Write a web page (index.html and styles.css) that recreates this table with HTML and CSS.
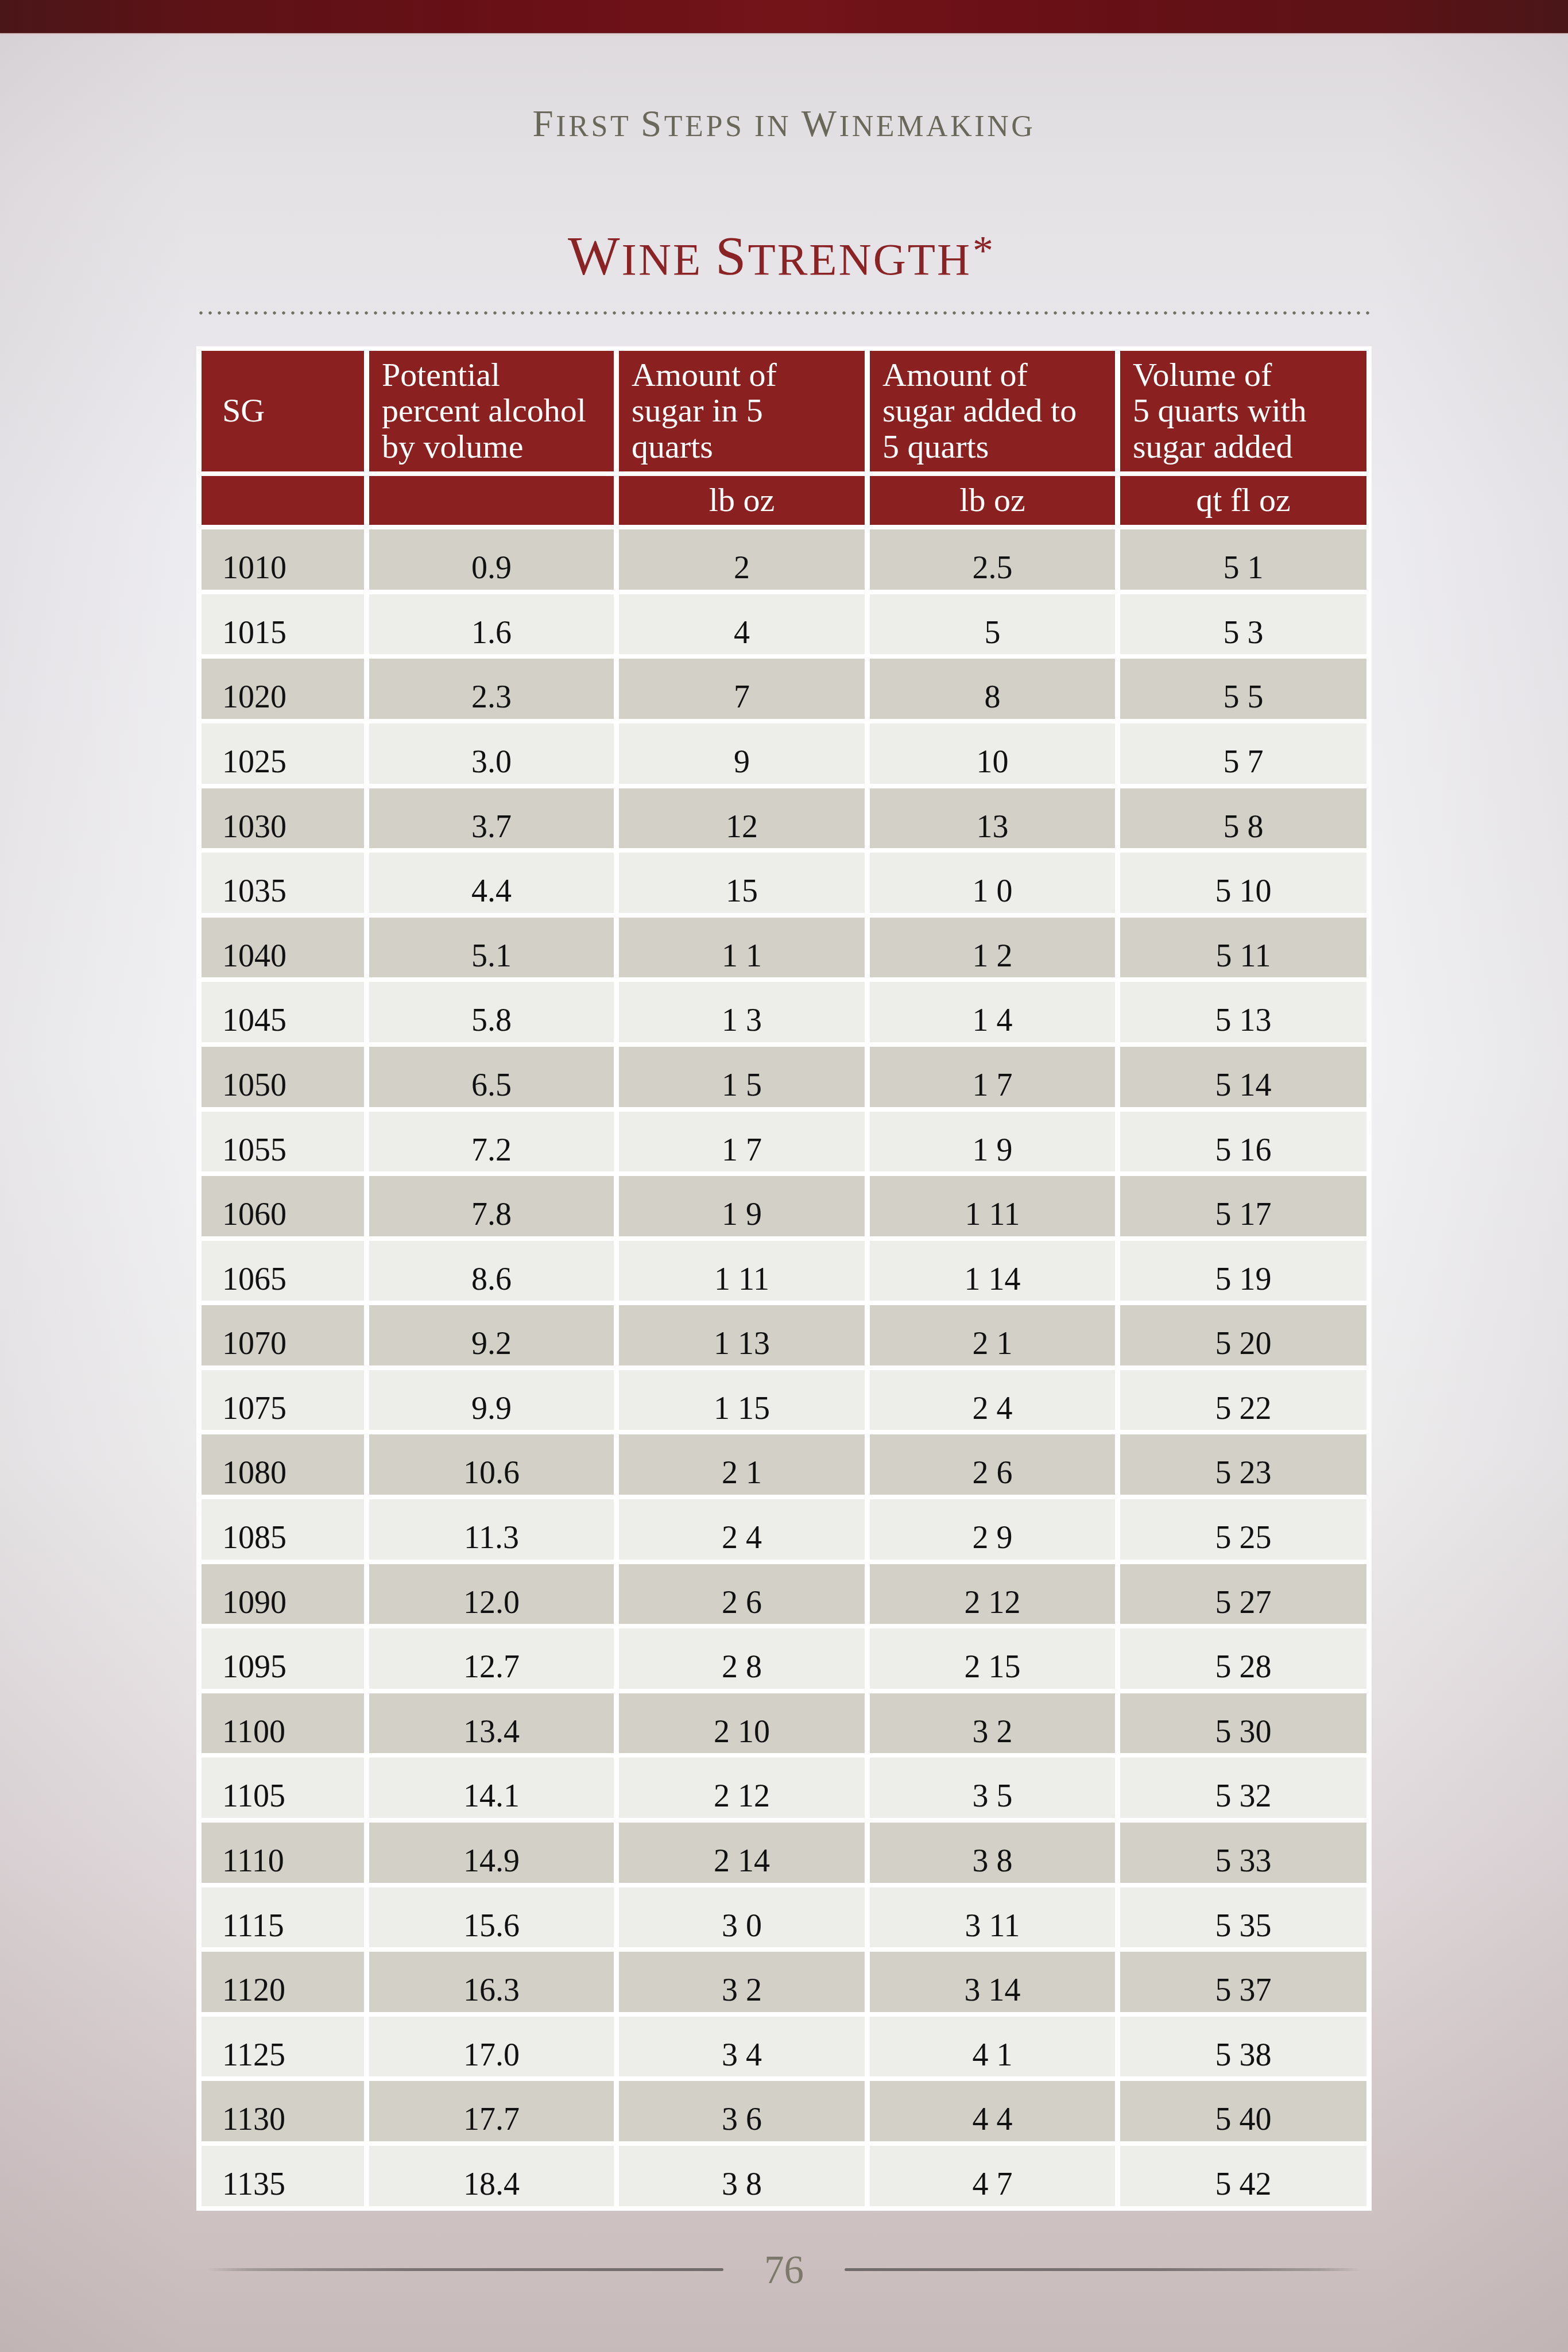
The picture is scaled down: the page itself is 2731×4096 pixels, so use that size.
FILE: index.html
```html
<!DOCTYPE html>
<html lang="en">
<head>
<meta charset="utf-8">
<title>Wine Strength</title>
<link rel="stylesheet" href="styles.css">
</head>
<body>
<div class="page">
  <div class="topbar"></div>
  <div class="running-head"><span class="cap">F</span>irst <span class="cap">S</span>teps in <span class="cap">W</span>inemaking</div>
  <h1 class="title"><span class="cap">W</span>ine <span class="cap">S</span>trength<span class="ast">*</span></h1>
  <div class="rule"></div>
  <table class="strength">
    <colgroup>
      <col class="c1"><col class="c2"><col class="c3"><col class="c4"><col class="c5">
    </colgroup>
    <thead>
      <tr class="head-main">
        <th class="first">SG</th>
        <th>Potential<br>percent alcohol<br>by volume</th>
        <th>Amount of<br>sugar in 5<br>quarts</th>
        <th>Amount of<br>sugar added to<br>5 quarts</th>
        <th>Volume of<br>5 quarts with<br>sugar added</th>
      </tr>
      <tr class="head-units">
        <th></th>
        <th></th>
        <th>lb oz</th>
        <th>lb oz</th>
        <th>qt fl oz</th>
      </tr>
    </thead>
    <tbody>
      <tr><td>1010</td><td>0.9</td><td>2</td><td>2.5</td><td>5 1</td></tr>
      <tr><td>1015</td><td>1.6</td><td>4</td><td>5</td><td>5 3</td></tr>
      <tr><td>1020</td><td>2.3</td><td>7</td><td>8</td><td>5 5</td></tr>
      <tr><td>1025</td><td>3.0</td><td>9</td><td>10</td><td>5 7</td></tr>
      <tr><td>1030</td><td>3.7</td><td>12</td><td>13</td><td>5 8</td></tr>
      <tr><td>1035</td><td>4.4</td><td>15</td><td>1 0</td><td>5 10</td></tr>
      <tr><td>1040</td><td>5.1</td><td>1 1</td><td>1 2</td><td>5 11</td></tr>
      <tr><td>1045</td><td>5.8</td><td>1 3</td><td>1 4</td><td>5 13</td></tr>
      <tr><td>1050</td><td>6.5</td><td>1 5</td><td>1 7</td><td>5 14</td></tr>
      <tr><td>1055</td><td>7.2</td><td>1 7</td><td>1 9</td><td>5 16</td></tr>
      <tr><td>1060</td><td>7.8</td><td>1 9</td><td>1 11</td><td>5 17</td></tr>
      <tr><td>1065</td><td>8.6</td><td>1 11</td><td>1 14</td><td>5 19</td></tr>
      <tr><td>1070</td><td>9.2</td><td>1 13</td><td>2 1</td><td>5 20</td></tr>
      <tr><td>1075</td><td>9.9</td><td>1 15</td><td>2 4</td><td>5 22</td></tr>
      <tr><td>1080</td><td>10.6</td><td>2 1</td><td>2 6</td><td>5 23</td></tr>
      <tr><td>1085</td><td>11.3</td><td>2 4</td><td>2 9</td><td>5 25</td></tr>
      <tr><td>1090</td><td>12.0</td><td>2 6</td><td>2 12</td><td>5 27</td></tr>
      <tr><td>1095</td><td>12.7</td><td>2 8</td><td>2 15</td><td>5 28</td></tr>
      <tr><td>1100</td><td>13.4</td><td>2 10</td><td>3 2</td><td>5 30</td></tr>
      <tr><td>1105</td><td>14.1</td><td>2 12</td><td>3 5</td><td>5 32</td></tr>
      <tr><td>1110</td><td>14.9</td><td>2 14</td><td>3 8</td><td>5 33</td></tr>
      <tr><td>1115</td><td>15.6</td><td>3 0</td><td>3 11</td><td>5 35</td></tr>
      <tr><td>1120</td><td>16.3</td><td>3 2</td><td>3 14</td><td>5 37</td></tr>
      <tr><td>1125</td><td>17.0</td><td>3 4</td><td>4 1</td><td>5 38</td></tr>
      <tr><td>1130</td><td>17.7</td><td>3 6</td><td>4 4</td><td>5 40</td></tr>
      <tr><td>1135</td><td>18.4</td><td>3 8</td><td>4 7</td><td>5 42</td></tr>
    </tbody>
  </table>
  <div class="footer">
    <span class="fline left"></span>
    <span class="folio">76</span>
    <span class="fline right"></span>
  </div>
</div>
</body>
</html>
```

FILE: styles.css
```css
html, body {
  margin: 0;
  padding: 0;
}

body {
  width: 2731px;
  min-height: 4096px;
  font-family: "Liberation Serif", "Times New Roman", serif;
  background:
    linear-gradient(to right, rgba(120, 100, 110, 0.07), rgba(0, 0, 0, 0) 12%, rgba(0, 0, 0, 0) 88%, rgba(120, 100, 110, 0.07)),
    linear-gradient(to bottom, #dcd8dc 0px, #e5e2e6 8%, #ecebef 22%, #f0f0f2 45%, #ecebec 62%, #e0d9db 78%, #d2c7c8 90%, #c7baba 100%);
}

.page {
  width: 2731px;
  min-height: 4096px;
  overflow: hidden;
}

.topbar {
  height: 57px;
  background: linear-gradient(to right, #4a1618 0%, #5c1216 12%, #6a1016 35%, #731419 50%, #6a1016 65%, #5c1216 88%, #4a1618 100%);
  box-shadow: 0 1px 0 #6b3a3c, 0 3px 3px rgba(230, 170, 170, 0.35);
}

.running-head {
  margin-top: 117.6px;
  height: 80px;
  line-height: 80px;
  text-align: center;
  font-size: 52px;
  text-transform: uppercase;
  letter-spacing: 4.6px;
  color: #6a685a;
  white-space: nowrap;
}

.running-head .cap {
  font-size: 65px;
}

.title {
  margin: 136px 0 0;
  padding-right: 12px;
  height: 110px;
  line-height: 110px;
  text-align: center;
  font-size: 79px;
  font-weight: normal;
  text-transform: uppercase;
  letter-spacing: 3px;
  color: #8a2326;
  white-space: nowrap;
}

.title .cap {
  font-size: 96px;
}

.title .ast {
  font-size: 72px;
  line-height: 0;
  vertical-align: 18px;
  letter-spacing: 0;
  margin-left: 2px;
}

.rule {
  width: 2047px;
  height: 6px;
  margin: 41px auto 0;
  background: radial-gradient(circle, #707065 2.4px, rgba(112, 112, 101, 0) 3px) 0 0 / 16px 6px repeat-x;
}

.strength {
  margin: 55px auto 0;
  width: 2047px;
  table-layout: fixed;
  border-collapse: separate;
  border-spacing: 9px 8px;
  background: #ffffff;
}

.c1 { width: 283px; }
.c2 { width: 426px; }
.c3 { width: 428px; }
.c4 { width: 427px; }
.c5 { width: 429px; }

.strength th {
  background: #8a2020;
  color: #ffffff;
  font-weight: normal;
  font-size: 58px;
  line-height: 62.5px;
  padding: 11.4px 10px 11.4px 22px;
  vertical-align: middle;
  text-align: left;
  white-space: nowrap;
}

.strength th.first {
  padding-left: 36px;
}

.strength .head-units th {
  text-align: center;
  padding-left: 0;
  padding-right: 0;
}

.strength td {
  font-size: 56px;
  line-height: 56px;
  padding: 38px 0 10.6px;
  color: #111111;
  text-align: center;
  white-space: nowrap;
}

.strength td:first-child {
  text-align: left;
  padding-left: 36px;
}

.strength tbody tr:nth-child(odd) td {
  background: #d3d0c8;
}

.strength tbody tr:nth-child(even) td {
  background: #edede9;
}

.footer {
  margin-top: 63px;
  height: 80px;
  display: flex;
  align-items: center;
  justify-content: center;
  gap: 71px;
}

.folio {
  font-size: 69px;
  line-height: 80px;
  color: #7c796a;
}

.fline {
  display: block;
  width: 900px;
  height: 5px;
  border-radius: 3px;
}

.fline.left {
  background: linear-gradient(to right, rgba(140, 130, 130, 0) 0%, #a49b9b 8%, #8e8686 20%, #7a7272 40%, #716a6a 100%);
}

.fline.right {
  background: linear-gradient(to left, rgba(140, 130, 130, 0) 0%, #a49b9b 8%, #8e8686 20%, #7a7272 40%, #716a6a 100%);
}
```
